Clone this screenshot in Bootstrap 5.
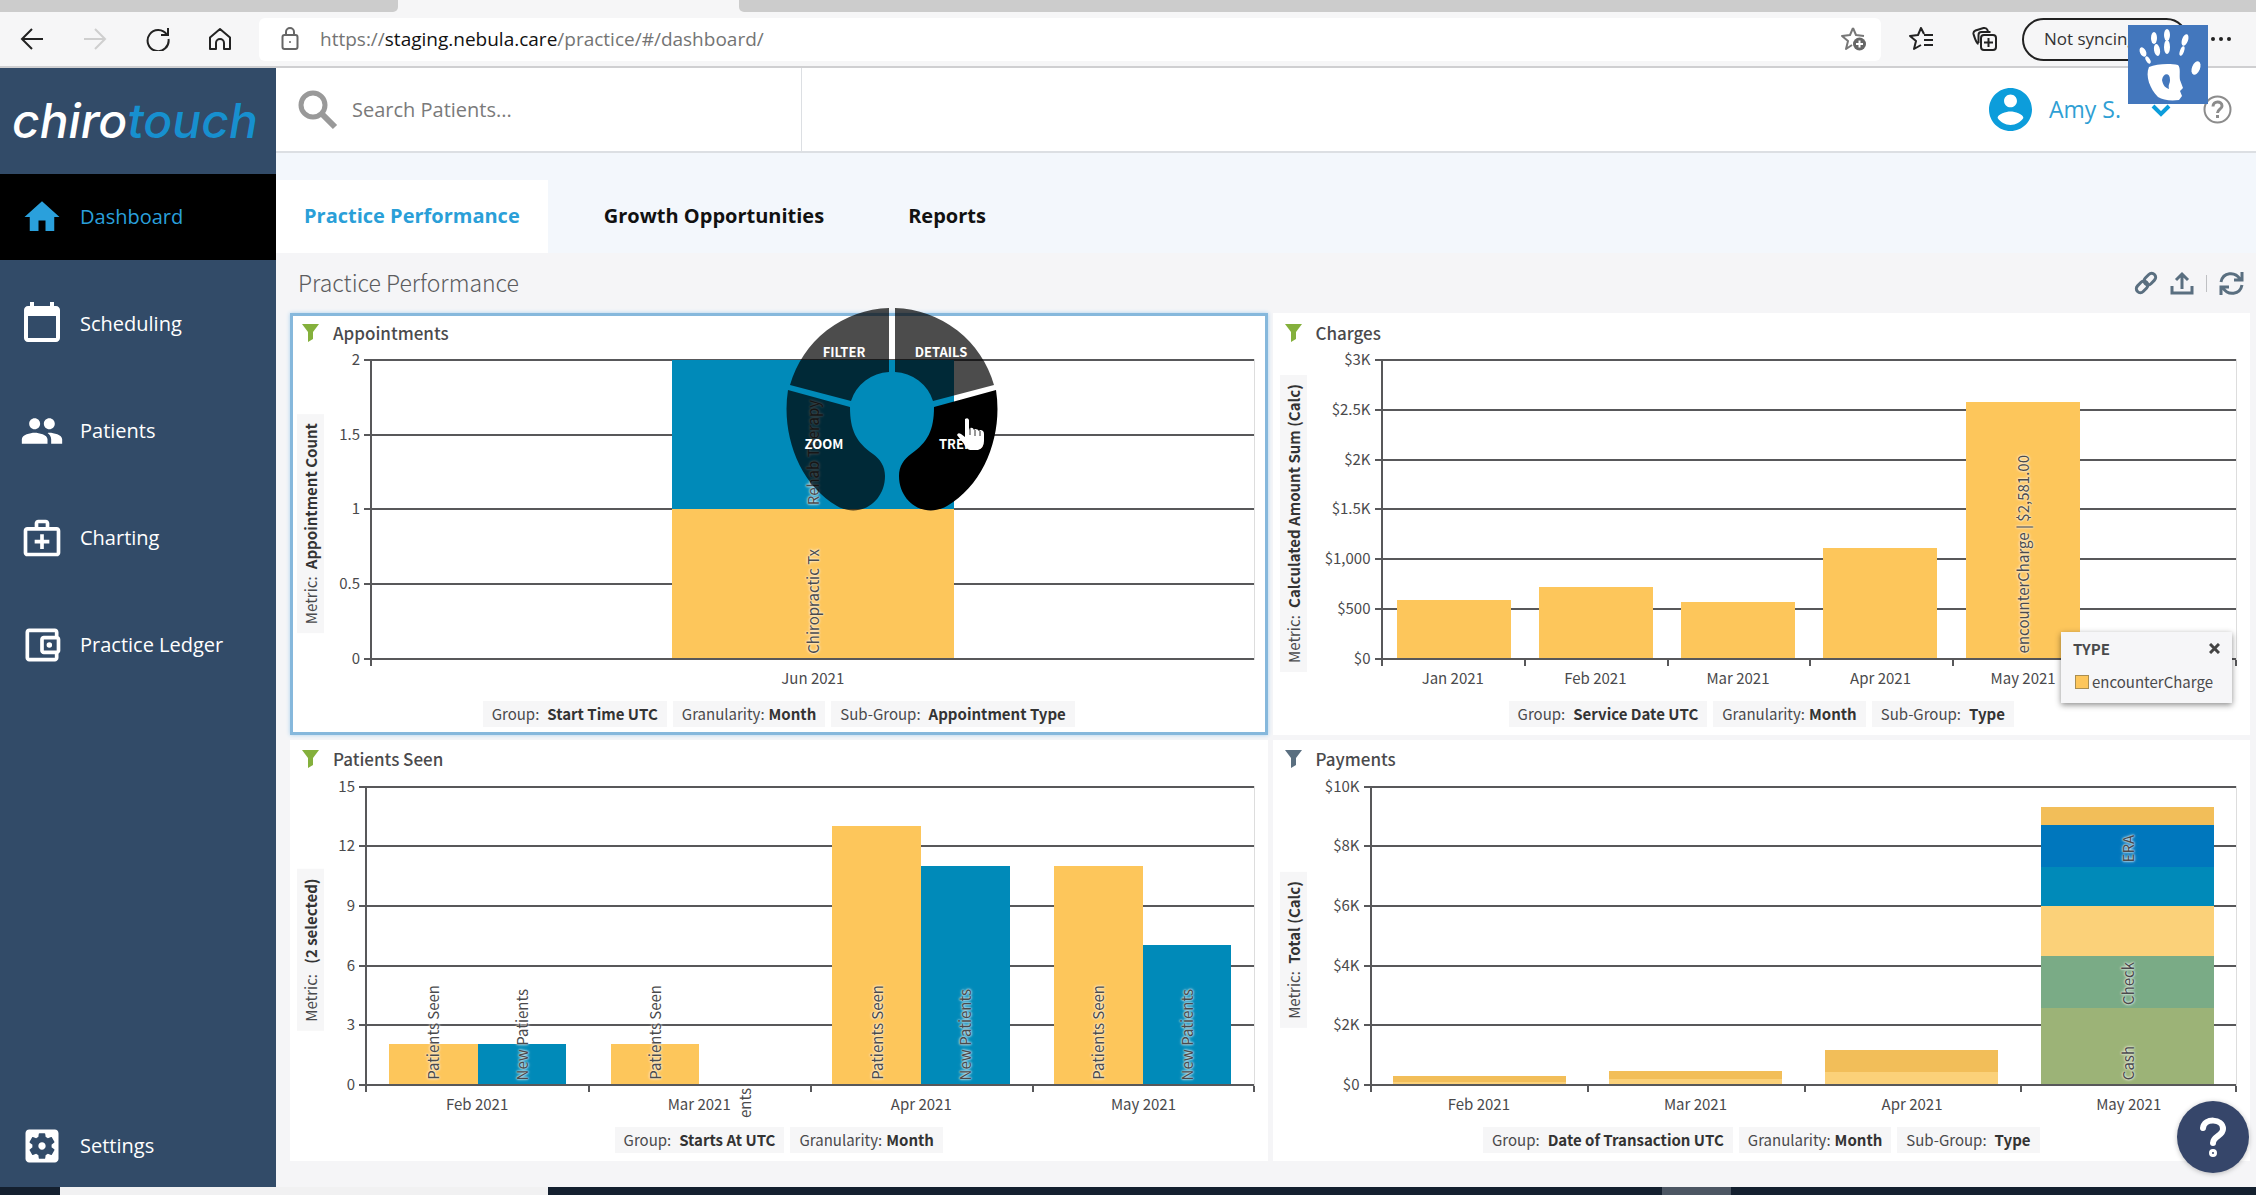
<!DOCTYPE html>
<html lang="en">
<head>
<meta charset="utf-8">
<meta name="viewport" content="width=device-width, initial-scale=1">
<title>Practice Performance</title>
<link href="https://cdn.jsdelivr.net/npm/bootstrap@5.3.0/dist/css/bootstrap.min.css" rel="stylesheet">
<script src="https://cdn.jsdelivr.net/npm/bootstrap@5.3.0/dist/js/bootstrap.bundle.min.js"></script>
<style>
  :root { --navy:#324b68; --brand:#0c9ddb; --gold:#fdc65b; --sea:#008ab9; --ink:#4a4a4c; }
  body { font-family:"Open Sans","Noto Sans",sans-serif; background:#f5f5f7; min-height:800px; overflow:hidden; }
  svg { display:block; flex:none; }
  button { background:none; border:0; padding:0; }

  /* browser frame */
  .tabstrip { height:12px; background:#f6f6f7; }
  .tab-a { width:398px; background:#ccc; border-radius:0 0 5px 0; }
  .tab-gap { width:341px; }
  .tab-b { background:#ccc; border-radius:0 0 0 5px; }
  .toolbar-row { height:56px; background:#f6f6f7; border-bottom:2px solid #cfcfd1; padding-left:20px; }
  .nav-icons { gap:39px; }
  .address { height:43px; border-radius:6px; background:#fff; padding:0 14px 0 22px; margin:0 28px; }
  .address a { color:#747474; font-size:19px; text-decoration:none; margin-left:21px; }
  .address a b { color:#111; font-weight:400; }
  .tool-icons { gap:38px; }
  .sync-pill { width:166px; height:43px; border:2px solid #222; border-radius:22px; font-size:17px; padding-left:20px; color:#333; text-align:left; white-space:nowrap; margin:0 22px 0 25px; }
  .palm { right:48px; top:25px; width:80px; height:79px; z-index:5; }

  /* side navigation */
  .side { width:276px; background:var(--navy); }
  .logo { height:106px; font:italic 500 48px/1 Inter,sans-serif; color:#fff; padding-left:12px; }
  .logo span { color:#1790cf; }
  .side-link { height:86px; margin-bottom:21px; color:#fff; font-size:20px; text-decoration:none; }
  .side-link:hover { color:#fff; }
  .side-link .ico { width:80px; display:flex; justify-content:center; padding-left:3px; }
  .side-link.active { background:#000; color:#2aa0dc; }
  .side-bottom { margin-bottom:-2px; }

  /* page header */
  .topbar { height:85px; background:#fff; border-bottom:2px solid #dcdfe3; }
  .search-box { width:526px; border-right:1px solid #dcdfe3; padding-left:22px; gap:12px; }
  .search-box input { border:0; outline:0; width:400px; font-size:20px; color:#777; }
  .search-box input::placeholder { color:#7a7a7a; opacity:1; }
  .user { color:#2f9fd4; font-size:23px; }
  .user span { margin:0 30px 0 17px; }
  .tabs-row { height:100px; background:#f3f7fc; }
  .tabs-row a { height:73px; font-size:20px; font-weight:700; color:#111; text-decoration:none; padding:0 28px 1px; margin-right:28px; }
  .tabs-row a.active { background:#fff; color:#2a9fd8; }
  .source { font-family:"Noto Sans CJK SC","Noto Sans",sans-serif; }
  .title-row { height:60px; padding:0 12px 0 22px; }
  .title-row h1 { font-size:23px; font-weight:300; color:#5c5c5e; margin:0; }

  /* chart panels */
  .panels { display:grid; grid-template-columns:1fr 1fr; grid-template-rows:1fr 1fr; gap:5px; padding:0 6px 26px 14px; min-height:0; }
  .panel { background:#fff; border:3px solid #fff; min-width:0; min-height:0; position:relative; color:var(--ink); font-size:15px; line-height:20px; }
  .panel.selected { border-color:#86b8dc; box-shadow:0 0 4px #a9d0ee; }
  .panel-head { height:30px; padding-left:9px; gap:14px; padding-top:3px; }
  .panel-head h2 { font-size:17px; line-height:24px; margin:0; }
  .panel-foot { padding-bottom:5px; gap:6px; }
  .chip { background:#f6f6f7; height:26px; padding:0 9px; gap:8px; display:flex; align-items:center; color:var(--ink); }
  .chip b { color:#333; }
  .chip.tight { gap:4px; }
  .metric { writing-mode:vertical-rl; transform:rotate(180deg); background:#f6f6f7; width:27px; padding:9px 0; margin-left:4px; text-align:center; line-height:27px; align-self:center; white-space:nowrap; }
  .metric b { color:#333; margin-top:4px; }
  .y-axis { display:flex; flex-direction:column; justify-content:space-between; margin:13px 0 43px; padding-right:11px; text-align:right; }
  .y-axis span { display:block; height:0; line-height:0; }
  .y47 { width:47px; } .y75 { width:75px; } .y42 { width:42px; } .y64 { width:64px; }
  .plot-col { flex:1 1 0; min-width:0; margin-right:10px; padding-top:13px; }
  .plot { display:grid; flex:1 1 0; min-height:0; border-right:1px solid #ddd; position:relative; }
  .plot > * { grid-area:1/1; min-height:0; }
  .lines { display:flex; flex-direction:column; justify-content:space-between; margin-left:-7px; }
  .lines i { height:2px; background:#58585a; }
  .bars { display:flex; padding:1px 0 2px; border-left:2px solid #58585a; margin-left:-1px; }
  .cat { flex:1 1 0; min-width:0; display:flex; align-items:flex-end; justify-content:center; }
  .cat > div { width:80%; }
  .cat.pair > div { width:40%; }
  .cat.solo > div { width:32%; }
  .bar { display:flex; align-items:flex-end; justify-content:center; }
  .stack { display:flex; flex-direction:column; }
  .gold { background:var(--gold); } .sea { background:var(--sea); } .amber { background:#f2be59; }
  .sand { background:#fbd179; } .azure { background:#0077bd; } .fern { background:#7aab86; } .olive { background:#9cb377; }
  .vlabel { writing-mode:vertical-rl; transform:rotate(180deg); white-space:nowrap; line-height:20px; padding-top:4px;
    text-shadow:0 0 2px rgba(255,255,255,.6),0 0 2px rgba(255,255,255,.6),0 0 3px rgba(255,255,255,.6),0 0 4px rgba(255,255,255,.4); }
  .x-axis { height:41px; display:flex; text-align:center; }
  .x-axis span { flex:1 1 0; padding-top:8px; position:relative; }
  .x-axis span::before { content:""; position:absolute; left:0; top:0; width:2px; height:6px; background:#58585a; }
  .x-axis span:first-child::before { left:-1px; }
  .x-axis.closed span:last-child::after { content:""; position:absolute; right:0; top:0; width:2px; height:6px; background:#58585a; }
  .overflow-label { position:absolute; right:-24px; top:-5px; padding:0; font-style:normal; }
  .radial { position:absolute; left:59%; top:55px; margin:-110px 0 0 -110px; z-index:3; }
  .radial text { font-weight:700; font-size:13px; fill:#fff; text-anchor:middle; }
  .legend-box { position:absolute; right:15px; bottom:29px; width:171px; height:71px; background:#f6f6f8; box-shadow:0 2px 6px rgba(0,0,0,.45); padding:7px 12px 11px; z-index:3; }
  .legend-box .swatch { width:14px; height:14px; background:var(--gold); border:1px solid #a98e52; margin:0 3px 0 2px; }
  .legend-box p { margin:0; }
  .help-fab { position:fixed; right:7px; bottom:22px; width:72px; height:72px; border-radius:50%; background:#36466a; z-index:6; box-shadow:0 1px 5px rgba(0,0,0,.25); }

  .taskbar { height:8px; background:#14202f; padding-left:60px; }
  .task-open { width:488px; background:#f1f1f2; }
  .task-item { width:69px; background:#4c5663; margin-right:525px; }
</style>
</head>
<body class="vh-100 d-flex flex-column">

<div class="tabstrip d-flex"><div class="tab-a"></div><div class="tab-gap"></div><div class="tab-b flex-grow-1"></div></div>
<div class="toolbar-row d-flex align-items-center">
  <div class="nav-icons d-flex align-items-center">
    <button aria-label="Back"><svg width="24" height="24" fill="none" stroke="#222" stroke-width="2"><path d="M23 12H2M12 2 2 12l10 10"/></svg></button>
    <button aria-label="Forward"><svg width="24" height="24" fill="none" stroke="#cfcfcf" stroke-width="2"><path d="M1 12h21M12 2l10 10-10 10"/></svg></button>
    <button aria-label="Refresh"><svg width="24" height="24" fill="none" stroke="#222" stroke-width="2"><path d="M21 8A10.500 10.500 0 1 0 22.500 12M22 1v7h-7"/></svg></button>
    <button aria-label="Home"><svg width="22" height="24" fill="none" stroke="#222" stroke-width="2" stroke-linejoin="round"><path d="M1 10.500 11 2l10 8.500V22h-6v-6a4 4 0 0 0-8 0v6H1z"/></svg></button>
  </div>
  <div class="address d-flex align-items-center flex-grow-1">
    <svg width="18" height="24" fill="none" stroke="#666" stroke-width="2"><rect x="1.500" y="8" width="15" height="14" rx="2"/><path d="M5 8V5a4 4 0 0 1 8 0v3"/><circle cx="9" cy="15" r="1" fill="#666" stroke="none"/></svg>
    <a href="#">https://<b>staging.nebula.care</b>/practice/#/dashboard/</a>
    <button class="ms-auto" aria-label="Add to favourites"><svg width="26" height="26" fill="none" stroke="#777" stroke-width="2" stroke-linejoin="round"><path d="M12 2l3 7 8 1M12 2 9 9l-8 1 6 5-2 8 6-4"/><circle cx="18.500" cy="18" r="6.500" fill="#666" stroke="none"/><path stroke="#fff" d="M15 18h7M18.500 14.500v7"/></svg></button>
  </div>
  <div class="d-flex align-items-center me-4">
    <div class="tool-icons d-flex align-items-center">
      <button aria-label="Favourites"><svg width="25" height="26" fill="none" stroke="#222" stroke-width="2" stroke-linejoin="round"><path d="M15 8 12 2 9 9l-8 1 6 5-2 8 7-4M15 9h9M15 14h9M15 19h9"/></svg></button>
      <button aria-label="Collections"><svg width="25" height="26" fill="none" stroke="#222" stroke-width="2"><rect x="9" y="9" width="15" height="15" rx="3"/><path d="M16.500 12v9M12 16.500h9M6.500 18C4 17 3 13 1.500 8q-.5-2.500 2-3.500l8-2.500q3-.5 4 2l.5 2M6.500 17V9q0-3 3-3h9"/></svg></button>
    </div>
    <button class="sync-pill">Not syncing</button>
    <button aria-label="Settings and more"><svg width="22" height="6" fill="#222"><circle cx="3" cy="3" r="2"/><circle cx="11" cy="3" r="2"/><circle cx="19" cy="3" r="2"/></svg></button>
  </div>
</div>

<svg class="palm position-absolute" viewBox="0 0 80 79"><rect width="80" height="79" fill="#4377bd"/><g fill="#fff"><path d="M21 42c7-3 20-4 29-2 3 3 1 10 2 15l3 8-3 3 2 5-3 4c-9 1-16 0-21-3-8-8-13-21-9-30z"/><ellipse cx="15" cy="27" rx="3" ry="5" transform="rotate(-25 15 27)"/><ellipse cx="20" cy="35" rx="2" ry="4" transform="rotate(-30 20 35)"/><ellipse cx="26" cy="13" rx="3" ry="6"/><ellipse cx="29" cy="25" rx="3" ry="6" transform="rotate(-10 29 25)"/><ellipse cx="39" cy="10" rx="3" ry="6"/><ellipse cx="39" cy="22" rx="3" ry="7"/><ellipse cx="57" cy="15" rx="3" ry="6" transform="rotate(20 57 15)"/><ellipse cx="54" cy="26" rx="2" ry="5" transform="rotate(20 54 26)"/><ellipse cx="68" cy="43" rx="4" ry="7" transform="rotate(22 68 43)"/></g><path d="M34 55c1-7 8-8 8 0 0 4-2 4-1 9-3-1-6-3-7-9z" fill="#4377bd"/></svg>

<div class="d-flex flex-grow-1" style="min-height:0">
  <nav class="side d-flex flex-column flex-shrink-0">
    <div class="logo d-flex align-items-center">chiro<span>touch</span></div>
    <a class="side-link active d-flex align-items-center" href="#"><span class="ico"><svg width="42" height="42" viewBox="0 0 24 24" fill="currentColor"><path d="M10 20v-6h4v6h5v-8h3L12 3 2 12h3v8z"/></svg></span>Dashboard</a>
    <a class="side-link d-flex align-items-center" href="#"><span class="ico"><svg width="48" height="48" viewBox="0 0 24 24" fill="currentColor"><path d="M19 3h-1V1h-2v2H8V1H6v2H5c-1.110 0-1.990.9-1.990 2L3 19c0 1.100.89 2 2 2h14c1.100 0 2-.9 2-2V5c0-1.100-.9-2-2-2zm0 16H5V8h14v11z"/></svg></span>Scheduling</a>
    <a class="side-link d-flex align-items-center" href="#"><span class="ico"><svg width="44" height="44" viewBox="0 0 24 24" fill="currentColor"><path d="M16 11c1.660 0 2.990-1.340 2.990-3S17.660 5 16 5s-3 1.340-3 3 1.340 3 3 3zm-8 0c1.660 0 2.990-1.340 2.990-3S9.660 5 8 5 5 6.340 5 8s1.340 3 3 3zm0 2c-2.330 0-7 1.170-7 3.500V19h14v-2.500c0-2.330-4.670-3.500-7-3.500zm8 0c-.29 0-.62.02-.97.05 1.160.84 1.970 1.970 1.970 3.450V19h6v-2.500c0-2.330-4.670-3.500-7-3.500z"/></svg></span>Patients</a>
    <a class="side-link d-flex align-items-center" href="#"><span class="ico"><svg width="44" height="44" viewBox="0 0 24 24" fill="currentColor" fill-rule="evenodd"><path d="M20 6h-4V4c0-1.100-.9-2-2-2h-4c-1.100 0-2 .9-2 2v2H4c-1.100 0-2 .9-2 2v12c0 1.100.9 2 2 2h16c1.100 0 2-.9 2-2V8c0-1.100-.9-2-2-2zM10 4h4v2h-4V4zm10 16H4V8h16v12z"/><path d="M13 10h-2v3H8v2h3v3h2v-3h3v-2h-3z"/></svg></span>Charting</a>
    <a class="side-link d-flex align-items-center" href="#"><span class="ico"><svg width="44" height="44" viewBox="0 0 24 24" fill="currentColor" fill-rule="evenodd"><path d="M21 7.280V5c0-1.100-.9-2-2-2H5c-1.110 0-2 .9-2 2v14c0 1.100.89 2 2 2h14c1.100 0 2-.9 2-2v-2.280c.59-.35 1-.98 1-1.720V9c0-.74-.41-1.370-1-1.720zM20 9v6h-7V9h7zM5 19V5h14v2h-6c-1.100 0-2 .9-2 2v6c0 1.100.9 2 2 2h6v2H5z"/><circle cx="16" cy="12" r="1.500"/></svg></span>Practice Ledger</a>
    <a class="side-link side-bottom mt-auto d-flex align-items-center" href="#"><span class="ico"><svg width="44" height="44" viewBox="0 0 24 24" fill="currentColor"><path d="M12 10c-1.100 0-2 .9-2 2s.9 2 2 2 2-.9 2-2-.9-2-2-2zm7-7H5c-1.110 0-2 .9-2 2v14c0 1.100.89 2 2 2h14c1.110 0 2-.9 2-2V5c0-1.100-.89-2-2-2zm-1.750 9c0 .23-.02.46-.05.68l1.480 1.160c.13.11.17.3.08.45l-1.400 2.420c-.09.15-.27.21-.43.15l-1.740-.7c-.36.28-.76.51-1.180.69l-.26 1.850c-.03.17-.18.3-.35.3h-2.800c-.17 0-.32-.13-.35-.29l-.26-1.850c-.43-.18-.82-.41-1.180-.69l-1.740.7c-.16.06-.34 0-.43-.15l-1.400-2.420c-.09-.15-.05-.34.08-.45l1.480-1.160c-.03-.23-.05-.46-.05-.69 0-.23.02-.46.05-.68l-1.480-1.160c-.13-.11-.17-.3-.08-.45l1.400-2.420c.09-.15.27-.21.43-.15l1.740.7c.36-.28.76-.51 1.180-.69l.26-1.850c.03-.17.18-.3.35-.3h2.800c.17 0 .32.13.35.29l.26 1.850c.43.18.82.41 1.180.69l1.740-.7c.16-.06.34 0 .43.15l1.400 2.420c.09.15.05.34-.08.45l-1.480 1.160c.03.23.05.46.05.69z"/></svg></span>Settings</a>
  </nav>

  <main class="flex-grow-1 d-flex flex-column" style="min-width:0">
    <header class="topbar d-flex flex-shrink-0 align-items-stretch">
      <label class="search-box d-flex align-items-center">
        <svg width="40" height="40" fill="none" stroke="#999" stroke-width="5"><circle cx="15" cy="15" r="12"/><path d="M24 24 37 37" stroke-width="6"/></svg>
        <input type="text" aria-label="Search Patients" placeholder="Search Patients...">
      </label>
      <div class="ms-auto d-flex align-items-center user">
        <svg width="43" height="43" viewBox="2 2 20 20" fill="#0c9ddb"><path d="M12 2C6.480 2 2 6.480 2 12s4.480 10 10 10 10-4.480 10-10S17.520 2 12 2zm0 3c1.660 0 3 1.340 3 3s-1.340 3-3 3-3-1.340-3-3 1.340-3 3-3zm0 14.200c-2.500 0-4.710-1.280-6-3.220.03-1.990 4-3.080 6-3.080 1.990 0 5.970 1.090 6 3.080-1.290 1.940-3.500 3.220-6 3.220z"/></svg>
        <span>Amy S.</span>
        <svg class="me-4" width="20" height="14" fill="none" stroke="#0c9ddb" stroke-width="4"><path d="M2 3l8 8 8-8"/></svg>
        <button class="ms-2 me-4" aria-label="Help"><svg width="29" height="29" fill="none" stroke="#8c8c8c" stroke-width="2"><circle cx="14.500" cy="14.500" r="13"/><path d="M10 11.500c0-6 9-6 9-.5 0 3-4.500 3.500-4.500 7" stroke-width="3"/><path d="M14.500 20v3" stroke-width="3"/></svg></button>
      </div>
    </header>
    <div class="tabs-row d-flex flex-shrink-0 align-items-end">
      <a class="active d-flex align-items-center" href="#">Practice Performance</a>
      <a class="d-flex align-items-center" href="#">Growth Opportunities</a>
      <a class="d-flex align-items-center" href="#">Reports</a>
    </div>
    <div class="title-row d-flex flex-shrink-0 align-items-center source">
      <h1>Practice Performance</h1>
      <div class="ms-auto d-flex align-items-center gap-2">
        <button aria-label="Link"><svg width="24" height="24" viewBox="0 0 24 24" fill="none" stroke="#5a6f80" stroke-width="3"><g transform="rotate(-45 12 12)"><rect x="0" y="8" width="13" height="8" rx="4"/><rect x="11" y="8" width="13" height="8" rx="4"/></g></svg></button>
        <button class="ms-1" aria-label="Export"><svg width="24" height="24" fill="none" stroke="#5a6f80" stroke-width="3"><path d="M2 15v7h20v-7M12 18V3M6 9l6-6 6 6"/></svg></button>
        <div class="vr mx-1 my-1"></div>
        <button aria-label="Reload"><svg width="25" height="25" fill="none" stroke="#5a6f80" stroke-width="3"><path d="M2 11C4 1 16 0 21 8M23 14C21 24 9 25 4 17M23 1v8h-8M2 24v-8h8"/></svg></button>
      </div>
    </div>

    <div class="panels flex-grow-1 source">
      <section class="panel selected d-flex flex-column">
        <div class="panel-head d-flex align-items-center"><svg width="17" height="18" fill="#84b03c"><path d="M0 0h17L11 8v7l-5 3V8z"/></svg><h2>Appointments</h2></div>
        <div class="d-flex flex-grow-1" style="min-height:0">
          <div class="metric">Metric: <b>Appointment Count</b></div>
          <div class="y-axis y47"><span>2</span><span>1.5</span><span>1</span><span>0.5</span><span>0</span></div>
          <div class="plot-col d-flex flex-column">
            <div class="plot">
              <div class="lines"><i></i><i></i><i></i><i></i><i></i></div>
              <div class="bars">
                <div class="cat solo"><div class="stack" style="height:100%">
                  <div class="bar sea" style="height:50%"><span class="vlabel">Rehab Therapy</span></div>
                  <div class="bar gold" style="height:50%"><span class="vlabel">Chiropractic Tx</span></div>
                </div></div>
              </div>
              <svg class="radial" width="220" height="220" viewBox="-110 -110 220 220">
                <g fill="#000" fill-opacity=".7">
                  <path d="M-3-106A106 106 0 0 0-102-29L-41-13A42 42 0 0 1-3-42Z"/>
                  <path d="M3-106A106 106 0 0 1 102-29L41-13A42 42 0 0 0 3-42Z"/>
                  <path d="M-104-24C-111 20-93 70-55 92C-32 105-7 88-7 62C-7 52-12 45-19 40C-36 28-42 16-42-7Z"/>
                </g>
                <path d="M104-24C111 20 93 70 55 92C32 105 7 88 7 62C7 52 12 45 19 40C36 28 42 16 42-7Z"/>
                <text x="-48" y="-57">FILTER</text><text x="49" y="-57">DETAILS</text><text x="-68" y="35">ZOOM</text><text x="69" y="35">TREND</text>
                <path fill="#fff" d="M73 5q3-2 4 1v10l1-2q3-1 4 2l1-1q3 0 4 2l1-1q4 0 4 4v7q0 7-6 9h-8q-4-1-6-6l-7-9q1-3 4-1l4 3z"/>
                <path stroke="#333" d="M78 14v7M83 16v6M88 17v5"/>
              </svg>
            </div>
            <div class="x-axis"><span>Jun 2021</span></div>
          </div>
        </div>
        <div class="panel-foot d-flex justify-content-center"><div class="chip">Group: <b>Start Time UTC</b></div><div class="chip tight">Granularity: <b>Month</b></div><div class="chip">Sub-Group: <b>Appointment Type</b></div></div>
      </section>

      <section class="panel d-flex flex-column">
        <div class="panel-head d-flex align-items-center"><svg width="17" height="18" fill="#84b03c"><path d="M0 0h17L11 8v7l-5 3V8z"/></svg><h2>Charges</h2></div>
        <div class="d-flex flex-grow-1" style="min-height:0">
          <div class="metric">Metric: <b>Calculated Amount Sum (Calc)</b></div>
          <div class="y-axis y75"><span>$3K</span><span>$2.5K</span><span>$2K</span><span>$1.5K</span><span>$1,000</span><span>$500</span><span>$0</span></div>
          <div class="plot-col d-flex flex-column">
            <div class="plot">
              <div class="lines"><i></i><i></i><i></i><i></i><i></i><i></i><i></i></div>
              <div class="bars">
                <div class="cat"><div class="bar gold" style="height:19.500%"></div></div>
                <div class="cat"><div class="bar gold" style="height:23.600%"></div></div>
                <div class="cat"><div class="bar gold" style="height:18.600%"></div></div>
                <div class="cat"><div class="bar gold" style="height:36.700%"></div></div>
                <div class="cat"><div class="bar gold" style="height:86%"><span class="vlabel">encounterCharge | $2,581.00</span></div></div>
                <div class="cat"></div>
              </div>
            </div>
            <div class="x-axis closed"><span>Jan 2021</span><span>Feb 2021</span><span>Mar 2021</span><span>Apr 2021</span><span>May 2021</span><span></span></div>
          </div>
        </div>
        <div class="panel-foot d-flex justify-content-center"><div class="chip">Group: <b>Service Date UTC</b></div><div class="chip tight">Granularity: <b>Month</b></div><div class="chip">Sub-Group: <b>Type</b></div></div>
        <div class="legend-box d-flex flex-column justify-content-between">
          <div class="d-flex align-items-center justify-content-between"><b>TYPE</b><button aria-label="Close"><svg width="11" height="11" stroke="#444" stroke-width="3"><path d="M1 1l9 9M10 1l-9 9"/></svg></button></div>
          <p class="d-flex align-items-center"><span class="swatch"></span>encounterCharge</p>
        </div>
      </section>

      <section class="panel d-flex flex-column">
        <div class="panel-head d-flex align-items-center"><svg width="17" height="18" fill="#84b03c"><path d="M0 0h17L11 8v7l-5 3V8z"/></svg><h2>Patients Seen</h2></div>
        <div class="d-flex flex-grow-1" style="min-height:0">
          <div class="metric">Metric:&nbsp; <b>(2 selected)</b></div>
          <div class="y-axis y42"><span>15</span><span>12</span><span>9</span><span>6</span><span>3</span><span>0</span></div>
          <div class="plot-col d-flex flex-column">
            <div class="plot">
              <div class="lines"><i></i><i></i><i></i><i></i><i></i><i></i></div>
              <div class="bars">
                <div class="cat pair"><div class="bar gold" style="height:13.330%"><span class="vlabel">Patients Seen</span></div><div class="bar sea" style="height:13.330%"><span class="vlabel">New Patients</span></div></div>
                <div class="cat pair"><div class="bar gold" style="height:13.330%"><span class="vlabel">Patients Seen</span></div><div class="bar" style="height:0"></div></div>
                <div class="cat pair"><div class="bar gold" style="height:86.670%"><span class="vlabel">Patients Seen</span></div><div class="bar sea" style="height:73.330%"><span class="vlabel">New Patients</span></div></div>
                <div class="cat pair"><div class="bar gold" style="height:73.330%"><span class="vlabel">Patients Seen</span></div><div class="bar sea" style="height:46.670%"><span class="vlabel">New Patients</span></div></div>
              </div>
            </div>
            <div class="x-axis closed"><span>Feb 2021</span><span><em class="position-relative fst-normal">Mar 2021<em class="vlabel overflow-label">ents</em></em></span><span>Apr 2021</span><span>May 2021</span></div>
          </div>
        </div>
        <div class="panel-foot d-flex justify-content-center"><div class="chip">Group: <b>Starts At UTC</b></div><div class="chip tight">Granularity: <b>Month</b></div></div>
      </section>

      <section class="panel d-flex flex-column">
        <div class="panel-head d-flex align-items-center"><svg width="17" height="18" fill="#5a6f80"><path d="M0 0h17L11 8v7l-5 3V8z"/></svg><h2>Payments</h2></div>
        <div class="d-flex flex-grow-1" style="min-height:0">
          <div class="metric">Metric: <b>Total (Calc)</b></div>
          <div class="y-axis y64"><span>$10K</span><span>$8K</span><span>$6K</span><span>$4K</span><span>$2K</span><span>$0</span></div>
          <div class="plot-col d-flex flex-column">
            <div class="plot">
              <div class="lines"><i></i><i></i><i></i><i></i><i></i><i></i></div>
              <div class="bars">
                <div class="cat"><div class="stack" style="height:2.700%"><div class="amber" style="height:80%"></div><div class="sand" style="height:20%"></div></div></div>
                <div class="cat"><div class="stack" style="height:4.400%"><div class="amber" style="height:64%"></div><div class="sand" style="height:36%"></div></div></div>
                <div class="cat"><div class="stack" style="height:11.500%"><div class="amber" style="height:66%"></div><div class="sand" style="height:34%"></div></div></div>
                <div class="cat"><div class="stack" style="height:93%">
                  <div class="amber" style="height:6.300%"></div>
                  <div class="bar azure" style="height:15.200%"><span class="vlabel">ERA</span></div>
                  <div class="sea" style="height:14.100%"></div>
                  <div class="sand" style="height:18.300%"></div>
                  <div class="bar fern" style="height:18.800%"><span class="vlabel">Check</span></div>
                  <div class="bar olive" style="height:27.300%"><span class="vlabel">Cash</span></div>
                </div></div>
              </div>
            </div>
            <div class="x-axis closed"><span>Feb 2021</span><span>Mar 2021</span><span>Apr 2021</span><span>May 2021</span></div>
          </div>
        </div>
        <div class="panel-foot d-flex justify-content-center"><div class="chip">Group: <b>Date of Transaction UTC</b></div><div class="chip tight">Granularity: <b>Month</b></div><div class="chip">Sub-Group: <b>Type</b></div></div>
      </section>
    </div>
  </main>
</div>

<button class="help-fab d-flex align-items-center justify-content-center" aria-label="Get help"><svg width="30" height="40" fill="none" stroke="#fff" stroke-width="6" stroke-linecap="round"><path d="M5 11C6 1 25 1 25 12c0 7-10 7-10 14"/><circle cx="15" cy="36" r="1.500" stroke-width="5"/></svg></button>

<footer class="taskbar d-flex flex-shrink-0"><div class="task-open"></div><div class="task-item ms-auto"></div></footer>
</body>
</html>
